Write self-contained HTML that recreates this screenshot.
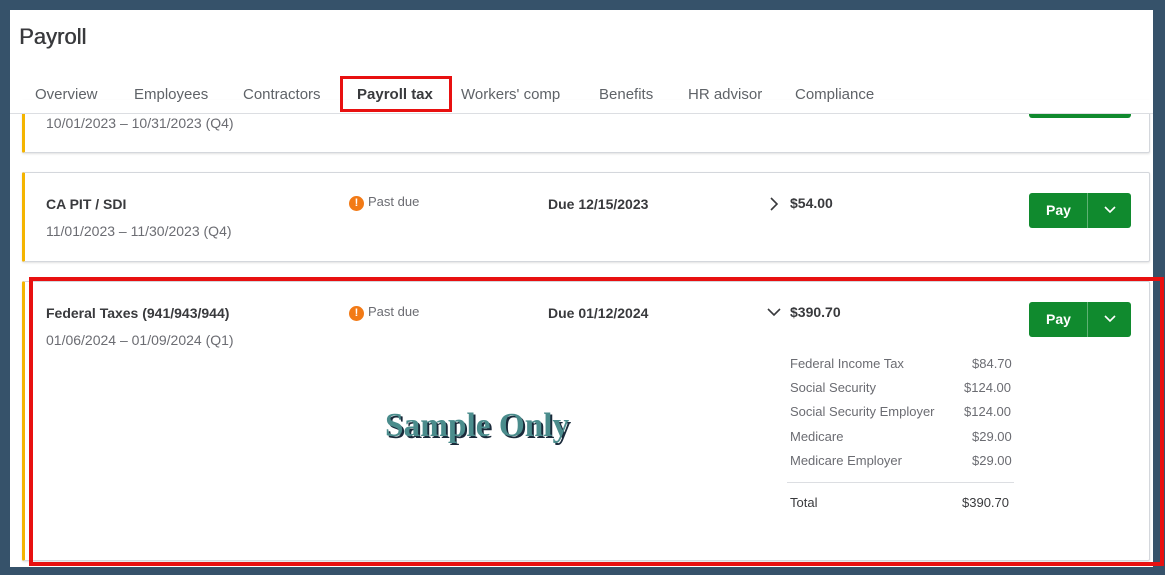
<!DOCTYPE html>
<html><head><style>
*{margin:0;padding:0;box-sizing:border-box}
body{width:1165px;height:575px;background:#36526a;font-family:"Liberation Sans",sans-serif;position:relative;overflow:hidden}
.main{position:absolute;left:10px;top:10px;width:1143px;height:557px;background:#fff;overflow:hidden}
.a{position:absolute;white-space:nowrap}
.tab{position:absolute;top:86px;font-size:15px;color:#5f6368}
.card{position:absolute;left:22px;width:1128px;background:#fff;border:1px solid #d4d7dc;border-left:3px solid #f4b400;border-radius:2px;box-shadow:0 1px 2px rgba(0,0,0,.12)}
.t{font-size:14px;font-weight:bold;color:#393a3d}
.d{font-size:14px;color:#6b6c72}
.pd{font-size:13px;color:#6b6c72}
.ic{display:inline-block;width:15px;height:15px;border-radius:50%;background:#f27a16;color:#fff;font-size:11px;font-weight:bold;text-align:center;line-height:15px;margin-right:4px;vertical-align:0px}
.pay{position:absolute;width:102px;height:35px;background:#108a2e;border-radius:3px;color:#fff}
.pay span{position:absolute;left:17px;top:9px;font-size:14px;font-weight:bold}
.pay i{position:absolute;left:58px;top:0;width:1px;height:35px;background:#5fb174}
.bd{font-size:13px;color:#6b6c72}
</style></head><body>
<div class="main"></div>
<div class="a" style="left:19px;top:24px;font-size:22px;color:#393a3d;text-shadow:0.5px 0 0 #393a3d">Payroll</div>

<div class="card" style="top:100px;height:53px"></div>
<div class="a" style="left:1029px;top:114px;width:102px;height:4px;background:#108a2e;border-radius:0 0 3px 3px"></div>
<div class="a d" style="left:46px;top:115px">10/01/2023 – 10/31/2023 (Q4)</div>
<div class="a" style="left:10px;top:100px;width:1143px;height:14px;background:#fff"></div>
<div class="a" style="left:10px;top:113px;width:1143px;height:1px;background:#dcdee2"></div>

<div class="tab" style="left:35px">Overview</div>
<div class="tab" style="left:134px">Employees</div>
<div class="tab" style="left:243px">Contractors</div>
<div class="tab" style="left:357px;font-weight:bold;color:#393a3d">Payroll tax</div>
<div class="tab" style="left:461px">Workers' comp</div>
<div class="tab" style="left:599px">Benefits</div>
<div class="tab" style="left:688px">HR advisor</div>
<div class="tab" style="left:795px">Compliance</div>

<div class="card" style="top:172px;height:90px"></div>
<div class="a t" style="left:46px;top:196px">CA PIT / SDI</div>
<div class="a d" style="left:46px;top:223px">11/01/2023 – 11/30/2023 (Q4)</div>
<div class="a pd" style="left:349px;top:194px"><span class="ic">!</span>Past due</div>
<div class="a t" style="left:548px;top:196px">Due 12/15/2023</div>
<svg class="a" style="left:769px;top:197px" width="10" height="14"><path d="M2 1l6 6-6 6" stroke="#393a3d" stroke-width="1.6" fill="none"/></svg>
<div class="a t" style="left:790px;top:195px">$54.00</div>
<div class="pay" style="left:1029px;top:193px"><span>Pay</span><i></i><svg style="position:absolute;left:74px;top:12px" width="14" height="10"><path d="M2 2l5 5 5-5" stroke="#fff" stroke-width="1.6" fill="none"/></svg></div>

<div class="card" style="top:281px;height:280px"></div>
<div class="a t" style="left:46px;top:305px">Federal Taxes (941/943/944)</div>
<div class="a d" style="left:46px;top:332px">01/06/2024 – 01/09/2024 (Q1)</div>
<div class="a pd" style="left:349px;top:304px"><span class="ic">!</span>Past due</div>
<div class="a t" style="left:548px;top:305px">Due 01/12/2024</div>
<svg class="a" style="left:767px;top:307px" width="14" height="10"><path d="M1 2l6 6 6-6" stroke="#393a3d" stroke-width="1.6" fill="none"/></svg>
<div class="a t" style="left:790px;top:304px">$390.70</div>
<div class="pay" style="left:1029px;top:302px"><span>Pay</span><i></i><svg style="position:absolute;left:74px;top:12px" width="14" height="10"><path d="M2 2l5 5 5-5" stroke="#fff" stroke-width="1.6" fill="none"/></svg></div>

<div class="a bd" style="left:790px;top:356px">Federal Income Tax</div><div class="a bd" style="left:972px;top:356px">$84.70</div>
<div class="a bd" style="left:790px;top:380px">Social Security</div><div class="a bd" style="left:964px;top:380px">$124.00</div>
<div class="a bd" style="left:790px;top:404px">Social Security Employer</div><div class="a bd" style="left:964px;top:404px">$124.00</div>
<div class="a bd" style="left:790px;top:429px">Medicare</div><div class="a bd" style="left:972px;top:429px">$29.00</div>
<div class="a bd" style="left:790px;top:453px">Medicare Employer</div><div class="a bd" style="left:972px;top:453px">$29.00</div>
<div class="a" style="left:787px;top:482px;width:227px;height:1px;background:#dcdee2"></div>
<div class="a bd" style="left:790px;top:495px;color:#393a3d">Total</div><div class="a bd" style="left:962px;top:495px;color:#393a3d">$390.70</div>

<div class="a" style="left:385px;top:407px;font-family:'Liberation Serif',serif;font-weight:bold;font-size:34px;color:#4a8c8c;text-shadow:2px 2px 0 #1a2a3a;transform:scaleX(0.98);transform-origin:left">Sample Only</div>

<div class="a" style="left:340px;top:76px;width:112px;height:36px;border:3px solid #e81010"></div>
<div class="a" style="left:29px;top:277px;width:1135px;height:289px;border:4px solid #e81010"></div>
</body></html>
